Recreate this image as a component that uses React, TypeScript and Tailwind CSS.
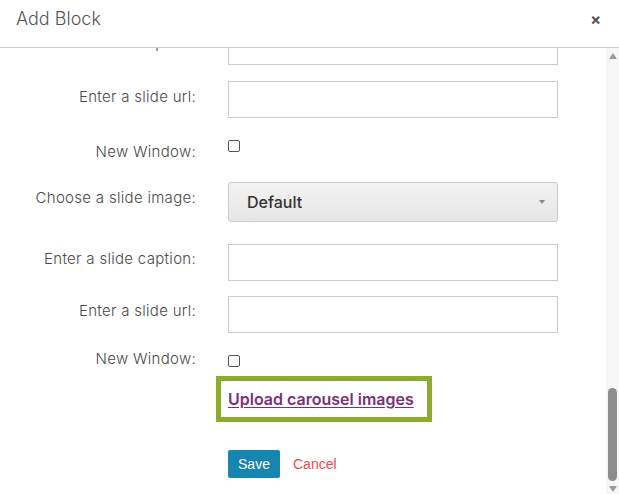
import React from "react";

const font = { fontFamily: "Inter, 'Noto Sans', sans-serif" };

function Label({ children, pt }: { children: React.ReactNode; pt: string }) {
  return (
    <div className={`w-[196px] shrink-0 text-right text-[15px] font-light tracking-[0.3px] leading-[20px] text-[#4a4a4a] ${pt}`}>
      {children}
    </div>
  );
}

function TextInput() {
  return <div className="h-[37px] w-[330px] border border-[#ccc] bg-white" />;
}

export default function App() {
  return (
    <div className="relative h-[494px] w-[619px] overflow-hidden bg-white" style={font}>
      {/* header */}
      <div className="flex h-[48px] items-center justify-between border-b border-[#ccc] pl-[16px] pr-[18px]">
        <div className="-mt-[9px] text-[18px] font-light leading-[24px] text-[#555]">Add Block</div>
        <div className="-mt-[9px] text-[16px] font-bold leading-none text-[#555]">×</div>
      </div>

      {/* body */}
      <div className="flex h-[446px]">
        <div className="flex-1 overflow-hidden">
          <div className="-mt-[20px] flex flex-col">
            {/* partial row */}
            <div className="flex gap-[32px]">
              <Label pt="pt-[5px]">Enter a slide caption:</Label>
              <TextInput />
            </div>
            <div className="mt-[16px] flex gap-[32px]">
              <Label pt="pt-[6px]">Enter a slide url:</Label>
              <TextInput />
            </div>
            <div className="mt-[16px] flex h-[48px] gap-[32px]">
              <Label pt="pt-[8px]">New Window:</Label>
              <div className="mt-[6px] h-[12px] w-[12px] rounded-[2px] border border-[#555]" />
            </div>
            <div className="flex gap-[32px]">
              <Label pt="pt-[6px]">Choose a slide image:</Label>
              <div className="flex h-[40px] w-[330px] items-center justify-between rounded-[3px] border border-[#ccc] bg-gradient-to-b from-[#f2f2f2] to-[#e6e6e6] pl-[18px] pr-[12px]">
                <span className="text-[16px] font-medium text-[#333]">Default</span>
                <span className="h-0 w-0 border-x-[3.5px] border-t-[4px] border-x-transparent border-t-[#888]" />
              </div>
            </div>
            <div className="mt-[22px] flex gap-[32px]">
              <Label pt="pt-[5px]">Enter a slide caption:</Label>
              <TextInput />
            </div>
            <div className="mt-[15px] flex gap-[32px]">
              <Label pt="pt-[5px]">Enter a slide url:</Label>
              <TextInput />
            </div>
            <div className="mt-[16px] flex h-[27px] gap-[32px]">
              <Label pt="pt-[0px]">New Window:</Label>
              <div className="mt-[6px] h-[12px] w-[12px] rounded-[2px] border border-[#555]" />
            </div>
            <div className="pl-[216px]">
              <div className="flex h-[46px] w-[216px] items-center border-[5px] border-[#8bac2a] pl-[7px]">
                <a className="text-[16px] font-semibold leading-[20px] text-[#7b2f7b] underline underline-offset-2">
                  Upload carousel images
                </a>
              </div>
            </div>
            <div className="mt-[28px] flex items-center gap-[13px] pl-[228px]" style={{ fontFamily: "'Liberation Sans', Arial, sans-serif" }}>
              <button className="h-[28px] w-[52px] rounded-[2px] bg-[#1685b0] text-[14px] text-white">Save</button>
              <span className="text-[14px] text-[#f04a4f]">Cancel</span>
            </div>
          </div>
        </div>
        {/* scrollbar */}
        <div className="flex w-[13px] flex-col items-center bg-[#f7f7f7]">
          <div className="mt-[5px] h-0 w-0 border-x-[4px] border-b-[6px] border-x-transparent border-b-[#999]" />
          <div className="flex-1" />
          <div className="h-[93px] w-[9px] rounded-full bg-[#8c8c8c]" />
          <div className="mt-[5px] mb-[2px] h-0 w-0 border-x-[4px] border-t-[6px] border-x-transparent border-t-[#999]" />
        </div>
      </div>
    </div>
  );
}
